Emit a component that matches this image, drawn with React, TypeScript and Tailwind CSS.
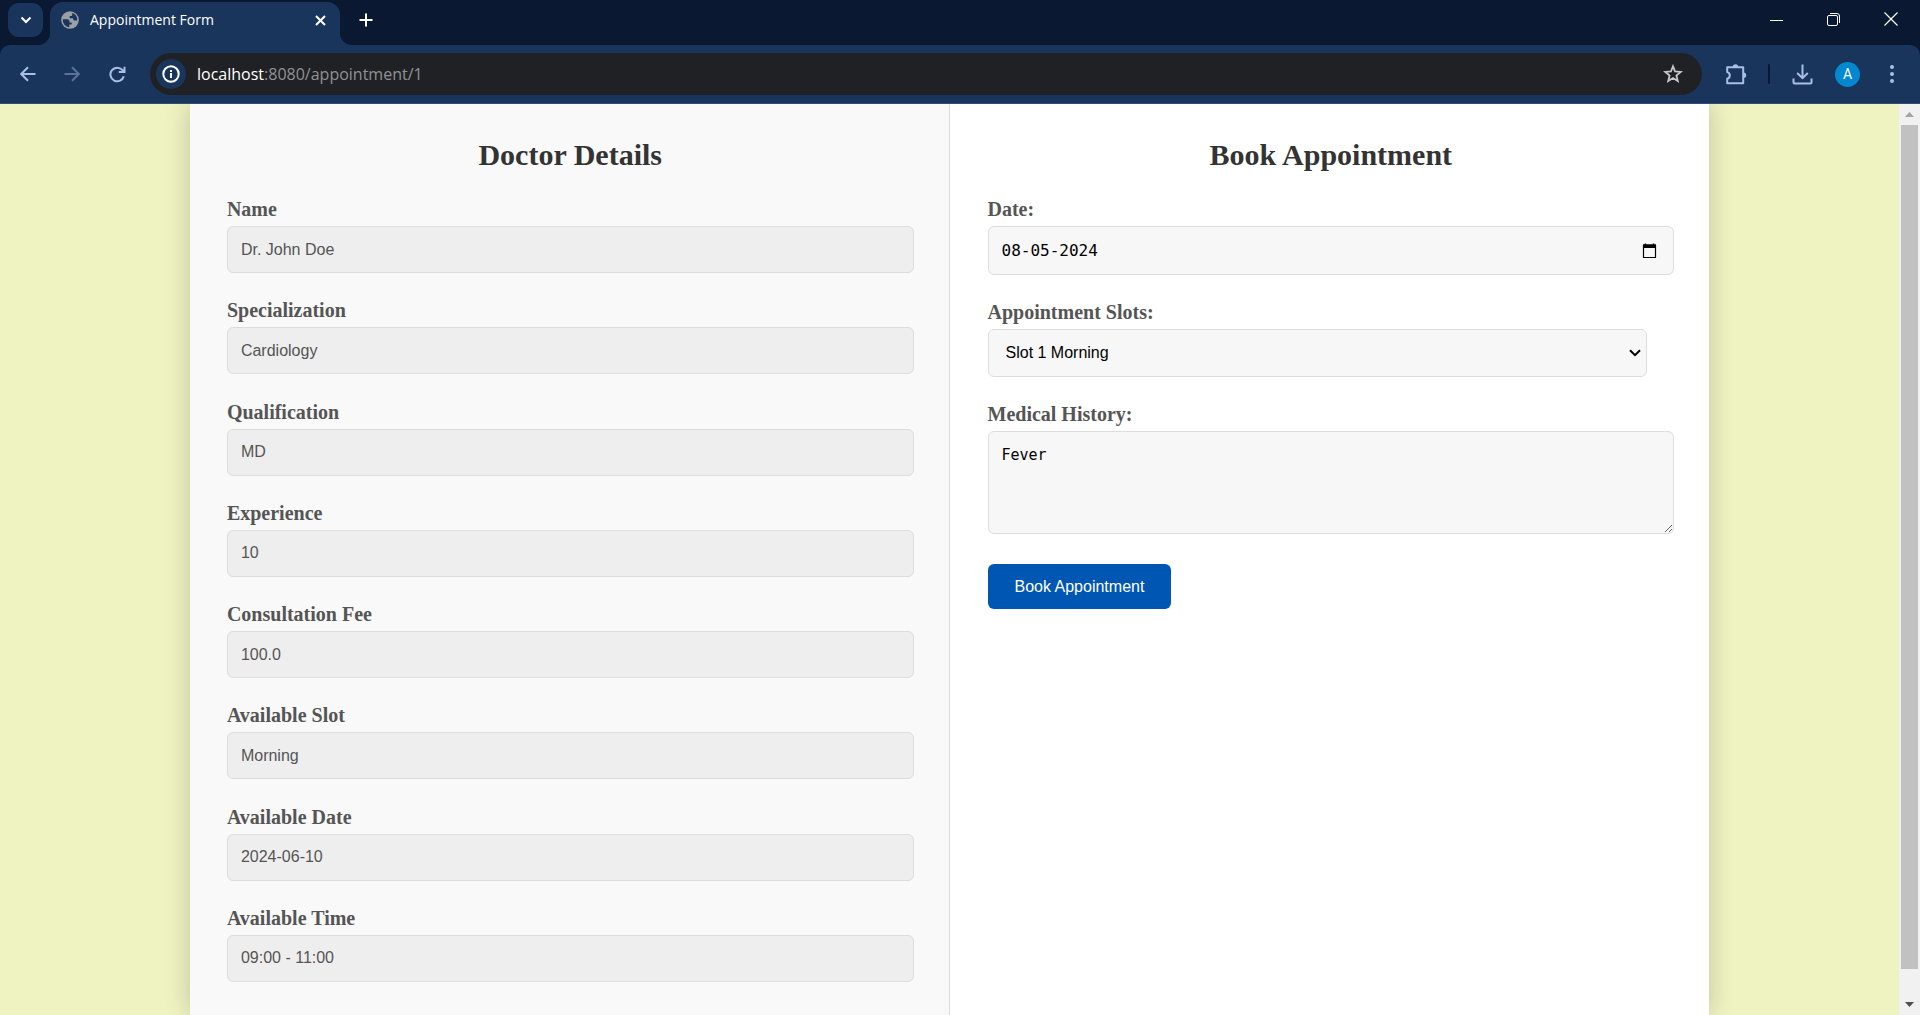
import React from "react";

const doctorFields = [
  { id: "name", label: "Name", value: "Dr. John Doe" },
  { id: "specialization", label: "Specialization", value: "Cardiology" },
  { id: "qualification", label: "Qualification", value: "MD" },
  { id: "experience", label: "Experience", value: "10" },
  { id: "fee", label: "Consultation Fee", value: "100.0" },
  { id: "slot", label: "Available Slot", value: "Morning" },
  { id: "available-date", label: "Available Date", value: "2024-06-10" },
  { id: "available-time", label: "Available Time", value: "09:00 - 11:00" },
];

const headingClass =
  "text-center font-['Liberation_Serif',serif] text-[30px] leading-[34px] font-bold text-[#333]";
const labelClass =
  "block font-['Liberation_Serif',serif] text-[20px] leading-[24px] font-bold text-[#555]";
const editableClass =
  "rounded-[6px] border border-[#ddd] bg-[#f7f7f7] text-black outline-none";

function TabFlare({ side }: { side: "left" | "right" }) {
  return (
    <svg width="12" height="12" viewBox="0 0 12 12" className="shrink-0 self-end" aria-hidden="true">
      <path d={side === "left" ? "M12 0v12H0A12 12 0 0 0 12 0z" : "M0 0v12h12A12 12 0 0 1 0 0z"} fill="#1a355b" />
    </svg>
  );
}

function GlobeIcon() {
  return (
    <svg width="18" height="18" viewBox="0 0 18 18" aria-hidden="true">
      <circle cx="9" cy="9" r="8.8" fill="#9aa0a6" />
      <path
        d="M1.800 8.300h4.400c1.400 0 2.300.9 2.300 2.200v1h2.200v1.900H8.300v2.900A7.300 7.300 0 0 1 1.800 8.300zM11.200 2.100A7.300 7.300 0 0 1 16.200 9.500h-2.600c-.9 0-1.500-.5-1.500-1.400V7.200H8.700V5.100h1.400c.7 0 1.100-.4 1.100-1.100z"
        fill="#1a355b"
      />
    </svg>
  );
}

function TabStrip() {
  return (
    <div className="flex h-[45px] shrink-0 items-start bg-[#0a1931] pl-2">
      <button aria-label="Search tabs" className="mt-[3px] flex h-[34px] w-[35px] shrink-0 items-center justify-center rounded-[11px] bg-[#1a355b]">
        <svg width="12" height="8" viewBox="0 0 12 8" fill="none" stroke="#fff" strokeWidth="2" aria-hidden="true">
          <path d="m1.5 1.5 4.500 4.500 4.500-4.500" />
        </svg>
      </button>
      <div className="-ml-[5px] flex h-[45px]">
        <TabFlare side="left" />
        <div className="mt-[2px] flex w-[290px] items-center rounded-t-[13px] bg-[#1a355b] pr-[12px] pb-[7px] pl-[11px]">
          <GlobeIcon />
          <span className="ml-[11px] flex-1 font-['Open_Sans',sans-serif] text-[14px] leading-[20px] text-white">Appointment Form</span>
          <button aria-label="Close tab" className="p-[2px]">
            <svg width="11" height="11" viewBox="0 0 11 11" stroke="#fff" strokeWidth="2" aria-hidden="true">
              <path d="m1 1 9 9M10 1 1 10" />
            </svg>
          </button>
        </div>
        <TabFlare side="right" />
      </div>
      <button aria-label="New tab" className="mt-[13px] ml-[7px]">
        <svg width="14" height="14" viewBox="0 0 14 14" stroke="#fff" strokeWidth="2" aria-hidden="true">
          <path d="M7 .5v13M.5 7h13" />
        </svg>
      </button>
      <div className="ml-auto flex items-center gap-[43px] pt-[12px] pr-[22px]">
        <button aria-label="Minimize">
          <svg width="14" height="13" viewBox="0 0 14 13" stroke="#fff" aria-hidden="true">
            <path d="M0 7.500h13" />
          </svg>
        </button>
        <button aria-label="Restore">
          <svg width="14" height="13" viewBox="0 0 14 13" fill="none" stroke="#fff" aria-hidden="true">
            <rect x=".5" y="2.500" width="10" height="10" rx="1.500" />
            <path d="M3 .5h7a2.500 2.500 0 0 1 2.500 2.500v7" />
          </svg>
        </button>
        <button aria-label="Close window">
          <svg width="14" height="14" viewBox="0 0 14 14" stroke="#fff" strokeWidth="1.200" aria-hidden="true">
            <path d="m.5.5 13 13M13.500.5l-13 13" />
          </svg>
        </button>
      </div>
    </div>
  );
}

function Toolbar() {
  return (
    <div className="shrink-0 bg-[#0a1931]">
      <div className="flex h-[59px] items-center rounded-t-[10px] border-b border-[#344c6f] bg-[#1a355b] pr-[25px] pl-[20px]">
        <button aria-label="Back">
          <svg width="16" height="16" viewBox="0 0 16 16" fill="none" stroke="#a8c0e6" strokeWidth="2" aria-hidden="true">
            <path d="M15.500 8H1.500M8 1.200 1.200 8 8 14.800" />
          </svg>
        </button>
        <button aria-label="Forward" className="ml-[28px]">
          <svg width="16" height="16" viewBox="0 0 16 16" fill="none" stroke="#59729a" strokeWidth="2" aria-hidden="true">
            <path d="M.5 8h14M8 1.200 14.800 8 8 14.800" />
          </svg>
        </button>
        <button aria-label="Reload" className="ml-[29px]">
          <svg width="17" height="17" viewBox="0 0 17 17" fill="none" stroke="#a8c0e6" strokeWidth="2" aria-hidden="true">
            <path d="M14.800 10.200A6.800 6.800 0 1 1 13.300 3.900l1.700 2M15.500.8V6H9.800" />
          </svg>
        </button>
        <div className="ml-[24px] flex h-[42px] flex-1 items-center rounded-full bg-[#202124] pr-[19px] pl-[6px]">
          <button aria-label="Site information" className="flex size-[30px] shrink-0 items-center justify-center rounded-full bg-[#1a355b]">
            <svg width="18" height="18" viewBox="0 0 18 18" fill="none" stroke="#fff" strokeWidth="2" aria-hidden="true">
              <circle cx="9" cy="9" r="7.700" />
              <path d="M9 8v5M9 5v2" />
            </svg>
          </button>
          <div className="ml-[11px] flex-1 font-['Open_Sans',sans-serif] text-[16px] leading-[22px] text-[#8f9296]">
            <span className="text-white">localhost</span>:8080/appointment/1
          </div>
          <button aria-label="Bookmark this tab">
            <svg width="20" height="20" viewBox="0 0 20 20" fill="none" stroke="#c7c7c7" strokeWidth="1.800" aria-hidden="true">
              <path d="m10 2.300 2.100 5.200 5.600.4-4.300 3.600 1.400 5.500-4.800-3-4.800 3 1.400-5.500-4.300-3.600 5.600-.4z" />
            </svg>
          </button>
        </div>
        <button aria-label="Extensions" className="ml-[24px]">
          <svg width="21" height="21" viewBox="0 0 21 21" fill="none" stroke="#a8c0e6" strokeWidth="2" strokeLinejoin="round" aria-hidden="true">
            <path d="M1.200 3.300h16V19.200h-16v-4.500a3.400 3.400 0 0 0 0-6.600z" />
            <path d="M6.800 3a2.700 2.700 0 0 1 5.400 0M17.500 8.500a2.700 2.700 0 0 1 0 5.400z" fill="#a8c0e6" stroke="none" />
          </svg>
        </button>
        <div className="ml-[21px] h-[20px] w-[2px] rounded-full bg-[#0a1931]" />
        <button aria-label="Downloads" className="ml-[22px]">
          <svg width="21" height="21" viewBox="0 0 21 21" fill="none" stroke="#a8c0e6" strokeWidth="2" aria-hidden="true">
            <path d="M10.500.5v13M5.200 9l5.300 5.200L15.800 9M1.500 14.500v4a1 1 0 0 0 1 1h16a1 1 0 0 0 1-1v-4" />
          </svg>
        </button>
        <button aria-label="Profile" className="ml-[22px] flex size-[25px] items-center justify-center rounded-full bg-[#0288d1] font-['Roboto',sans-serif] text-[14px] leading-[16px] text-white">
          A
        </button>
        <button aria-label="Browser menu" className="ml-[29px]">
          <svg width="6" height="18" viewBox="0 0 6 18" fill="#a8c0e6" aria-hidden="true">
            <circle cx="3" cy="2" r="2" />
            <circle cx="3" cy="9" r="2" />
            <circle cx="3" cy="16" r="2" />
          </svg>
        </button>
      </div>
    </div>
  );
}

function PageScrollbar() {
  return (
    <div className="flex w-[21px] shrink-0 flex-col items-center bg-[#f1f1f1]" aria-hidden="true">
      <svg width="9" height="5" viewBox="0 0 9 5" className="my-2 shrink-0" fill="#a3a3a3">
        <path d="M0 5 4.500 0 9 5z" />
      </svg>
      <div className="mb-[33px] w-[17px] flex-1 bg-[#c1c1c1]" />
      <svg width="9" height="5" viewBox="0 0 9 5" className="mb-2 shrink-0" fill="#505050">
        <path d="M0 0l4.500 5L9 0z" />
      </svg>
    </div>
  );
}

function DoctorDetails() {
  return (
    <section className="flex flex-1 flex-col border-r border-[#ddd] bg-[#f9f9f9] pt-[34px] pr-[35px] pb-[33px] pl-[37px]">
      <h2 className={headingClass}>Doctor Details</h2>
      <div className="mt-[25px] flex flex-1 flex-col justify-between">
        {doctorFields.map((field) => (
          <div key={field.id}>
            <label htmlFor={field.id} className={labelClass}>{field.label}</label>
            <input
              id={field.id}
              readOnly
              value={field.value}
              className="mt-[5px] block h-[47px] w-full rounded-[6px] border border-[#ddd] bg-[#eee] px-[13px] font-['Liberation_Sans',sans-serif] text-[16px] text-[#555] outline-none"
            />
          </div>
        ))}
      </div>
    </section>
  );
}

function BookAppointment() {
  return (
    <section className="flex-1 bg-white pt-[34px] pr-[35px] pb-[33px] pl-[38px]">
      <h2 className={headingClass}>Book Appointment</h2>
      <form className="mt-[25px]" onSubmit={(event) => event.preventDefault()}>
        <label htmlFor="date" className={labelClass}>Date:</label>
        <div className="relative mt-[5px]">
          <input
            id="date"
            defaultValue="08-05-2024"
            className={`${editableClass} block h-[49px] w-full px-[13px] font-['DejaVu_Sans_Mono',monospace] text-[16px]`}
          />
          <button type="button" aria-label="Open calendar" className="absolute inset-y-0 right-4 flex items-center">
            <svg width="16" height="16" viewBox="0 0 16 16" aria-hidden="true">
              <path d="M1.500 2h12v12.500h-12z" fill="none" stroke="#000" strokeWidth="1.200" strokeLinejoin="round" />
              <path d="M1 1.500h1.700V.5h1.500v1h6.600v-1h1.500v1H14V5H1z" />
            </svg>
          </button>
        </div>

        <label htmlFor="slots" className={`${labelClass} mt-[25px]`}>Appointment Slots:</label>
        <div className="relative mt-[5px] w-[96%]">
          <select
            id="slots"
            className={`${editableClass} block h-[48px] w-full appearance-none px-[17px] font-['Liberation_Sans',sans-serif] text-[16px]`}
          >
            <option>Slot 1 Morning</option>
          </select>
          <svg width="12" height="8" viewBox="0 0 12 8" fill="none" stroke="#000" strokeWidth="2" className="pointer-events-none absolute inset-y-0 right-[6px] my-auto" aria-hidden="true">
            <path d="m1 1.200 5 5 5-5" />
          </svg>
        </div>

        <label htmlFor="history" className={`${labelClass} mt-[25px]`}>Medical History:</label>
        <textarea
          id="history"
          defaultValue="Fever"
          className={`${editableClass} mt-[5px] block h-[103px] w-full resize-y px-[13px] py-[13px] font-['DejaVu_Sans_Mono',monospace] text-[15px] leading-[20px]`}
        />

        <button
          type="submit"
          className="mt-[30px] block h-[45px] rounded-[6px] bg-[#0056b3] px-[27px] font-['Liberation_Sans',sans-serif] text-[16px] text-white"
        >
          Book Appointment
        </button>
      </form>
    </section>
  );
}

export default function App() {
  return (
    <div className="flex h-screen flex-col overflow-hidden">
      <TabStrip />
      <Toolbar />
      <div className="flex min-h-0 flex-1">
        <main className="flex flex-1 justify-center overflow-hidden bg-[#eff3c2]">
          <div className="flex w-4/5 shadow-[0_0_24px_rgba(0,0,0,0.2)]">
            <DoctorDetails />
            <BookAppointment />
          </div>
        </main>
        <PageScrollbar />
      </div>
    </div>
  );
}
